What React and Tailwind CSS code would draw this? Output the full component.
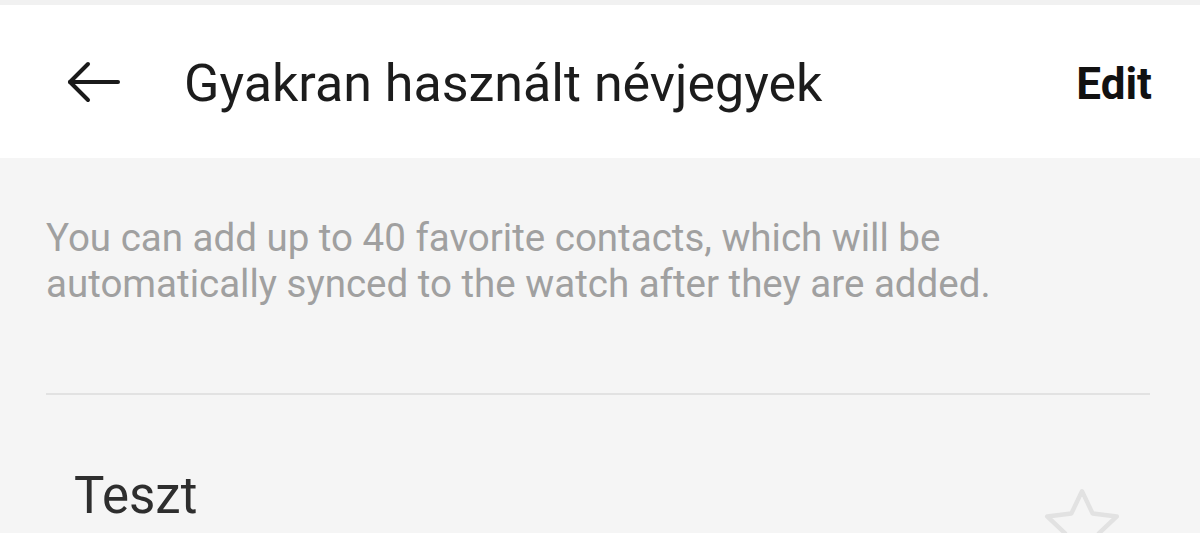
import React from "react";

const font = { fontFamily: "Roboto, 'Noto Sans', sans-serif" };

const BackArrow = () => (
  <svg width="56" height="44" viewBox="0 0 56 44" fill="none" stroke="#1a1a1a" strokeWidth="4" strokeLinecap="round" strokeLinejoin="round">
    <path d="M52 22H4" />
    <path d="M22 4L4 22l18 18" />
  </svg>
);

const Star = () => (
  <svg width="92" height="88" viewBox="0 0 24 24" fill="none" stroke="#e2e2e2" strokeWidth="1.2" strokeLinejoin="round">
    <path d="M12 2.5l2.9 6.1 6.6.8-4.9 4.6 1.3 6.6L12 17.3l-5.9 3.3 1.3-6.6-4.9-4.6 6.6-.8z" />
  </svg>
);

export default function App() {
  return (
    <div className="w-[1200px] h-[533px] overflow-hidden bg-[#f5f5f5]" style={font}>
      <div className="h-[5px] bg-[#f1f1f1]" />
      <header className="h-[153px] bg-white flex items-center pl-[66px] pr-[48px]">
        <BackArrow />
        <h1 className="ml-[62px] mt-[4px] text-[52px] text-[#1c1c1c] flex-1">Gyakran használt névjegyek</h1>
        <button className="mt-[4px] text-[44px] font-bold text-[#111]">Edit</button>
      </header>
      <div className="px-[46px] pt-[57px]">
        <p className="text-[38.5px] leading-[46px] text-[#a0a0a0]">
          You can add up to 40 favorite contacts, which will be
          <br />
          automatically synced to the watch after they are added.
        </p>
        <div className="mt-[86px] h-[2px] w-[1104px] bg-[#e2e2e2]" />
        <div className="flex items-start justify-between pl-[28px] pr-[26px] pt-[63px]">
          <span className="text-[51px] text-[#2e2e2e]">Teszt</span>
          <div className="mt-[24px]">
            <Star />
          </div>
        </div>
      </div>
    </div>
  );
}
